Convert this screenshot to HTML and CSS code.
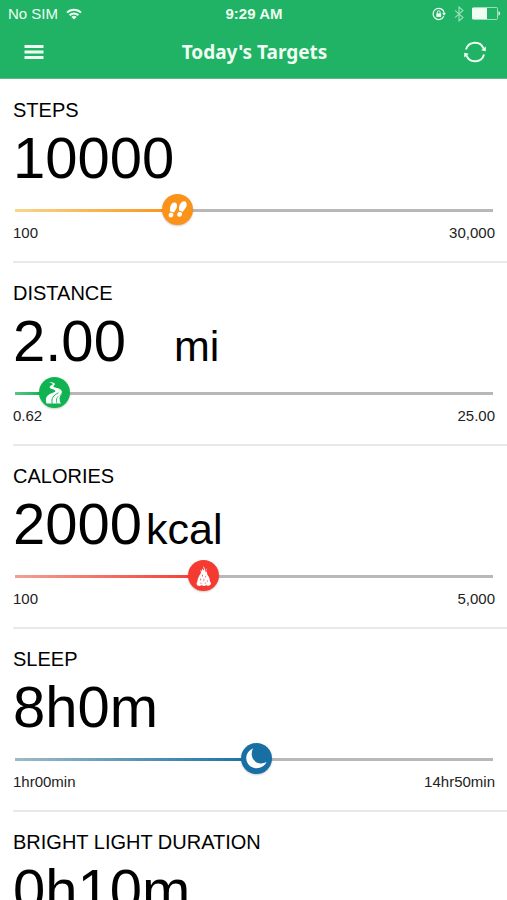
FILE: index.html
```html
<!DOCTYPE html>
<html lang="en">
<head>
    <meta charset="UTF-8">
    <meta name="viewport" content="width=device-width, initial-scale=1.0">
    <title>Today's Targets</title>
    <link rel="stylesheet" href="styles.css">
</head>
<body>
    <header class="header">
        <div class="status">
            <div class="status-left">
                <span>No SIM</span>
                <svg width="16" height="12" viewBox="0 0 16 12" fill="none" stroke="currentColor" stroke-width="2">
                    <path d="M1 4.6a10 10 0 0 1 14 0M3.6 7.3a6.3 6.3 0 0 1 8.800 0"/>
                    <path d="M8 11.6 5.4 9a3.7 3.7 0 0 1 5.2 0z" fill="currentColor" stroke="none"/>
                </svg>
            </div>
            <span class="time">9:29 AM</span>
            <div class="status-right">
                <svg width="14" height="14" viewBox="0 0 14 14" fill="none" stroke="currentColor">
                    <path d="M11.8 9.2A5.6 5.6 0 1 1 12.2 6" stroke-width="1.2"/>
                    <path d="M10.2 6h3.6L12 8.8z" fill="currentColor" stroke="none"/>
                    <path d="M4.3 6.3h4.9v3.6H4.3z" fill="currentColor" stroke="none"/>
                    <path d="M5.3 6.5V5.2a1.4 1.4 0 0 1 2.8 0v1.3"/>
                </svg>
                <svg class="bluetooth" width="10" height="16" viewBox="0 0 10 16" fill="none" stroke="currentColor" stroke-width="1.1">
                    <path d="M1 4.3 9 11.5 5 15V1l4 3.5L1 11.7"/>
                </svg>
                <svg width="28" height="13" viewBox="0 0 28 13">
                    <rect x=".5" y=".5" width="25" height="12" rx="1" fill="none" stroke="currentColor" opacity=".6"/>
                    <rect x="0" y="1" width="15" height="11" fill="currentColor"/>
                    <path d="M26.500 4.3c2 .6 2 3.8 0 4.4z" fill="currentColor"/>
                </svg>
            </div>
        </div>
        <div class="navbar">
            <button class="nav-btn" type="button" aria-label="Menu">
                <svg width="20" height="14" viewBox="0 0 20 14" fill="currentColor">
                    <path d="M.5 0h19v3H.5zM.5 5.5h19v3H.5zM.5 11h19v3H.5z"/>
                </svg>
            </button>
            <h1>Today's Targets</h1>
            <button class="nav-btn" type="button" aria-label="Refresh">
                <svg width="24" height="22" viewBox="0 0 24 22" fill="none" stroke="currentColor" stroke-width="1.9">
                    <path d="M3 8.6A9.3 9.3 0 0 1 20.6 7.6M21 13.4A9.3 9.3 0 0 1 3.4 14.4"/>
                    <path d="M22.8 5.6v4.6l-4.6-1zM1.2 16.4v-4.6l4.6 1z" fill="currentColor" stroke="none"/>
                </svg>
            </button>
        </div>
    </header>

    <main class="targets">
        <section class="target steps">
            <h2><label for="steps">STEPS</label></h2>
            <p class="value">10000</p>
            <div class="slider" style="--pos: 0.331">
                <input type="range" id="steps" min="100" max="30000" step="any" value="10000">
                <svg class="icon" viewBox="0 0 31 31" fill="#fff">
                    <path d="M12.800 8.500c2.200.3 2.700 2.800 1.900 5.200-.6 1.800-2 3-2.700 4.900l-4.100-1.300c.2-1.500-.2-2.600.3-4.400.7-2.500 2.400-4.700 4.600-4.400z"/>
                    <ellipse cx="9" cy="21" rx="2.300" ry="2.500" transform="rotate(20 9 21)"/>
                    <path d="M22.300 7.200c2.400.4 2.900 3 2 5.500-.7 2-2.600 3.200-3.500 5.200l-3.900-1.600c.3-1.500-.1-2.800.5-4.500.8-2.600 2.600-5 4.900-4.600z"/>
                    <ellipse cx="17.700" cy="20.300" rx="2.400" ry="2.500" transform="rotate(20 17.700 20.300)"/>
                </svg>
            </div>
            <div class="limits"><span>100</span><span>30,000</span></div>
        </section>

        <section class="target distance">
            <h2><label for="distance">DISTANCE</label></h2>
            <p class="value">2.00<span class="unit">mi</span></p>
            <div class="slider" style="--pos: 0.057">
                <input type="range" id="distance" min="0.62" max="25" step="any" value="2">
                <svg class="icon" viewBox="0 0 31 31" fill="#fff">
                    <path d="M10 5.200c3.500 0 6.200.6 5.900 2.100-.3 1.200-2.200 1.600-1.300 2.400 1.400 1.200 7.700 1.500 8.300 4.700.4 2.400-2.400 3.500-4.200 5.200-1.900 1.800-2.200 4-.9 7H7.600c-2-5.500.5-8.200 4.300-10 3.500-1.600 6.100-2.500 3.500-3.700-2.100-1-5-1.100-4.700-2.900.2-1.500 3.500-2 3-3-.3-.8-1.800-1.300-3.700-1.800z"/>
                    <path d="M23.300 16.500c-3 2.500-3.500 5.500-1.400 10.100h-3.500c-1.600-4.500.2-7.800 4.900-10.100z"/>
                    <path d="M19.500 15.800c-5.200 2.600-7.500 5.500-6.300 10.800" fill="none" stroke="#10b351"/>
                </svg>
            </div>
            <div class="limits"><span>0.62</span><span>25.00</span></div>
        </section>

        <section class="target calories">
            <h2><label for="calories">CALORIES</label></h2>
            <p class="value">2000<span class="unit">kcal</span></p>
            <div class="slider" style="--pos: 0.388">
                <input type="range" id="calories" min="100" max="5000" step="any" value="2000">
                <svg class="icon" viewBox="0 0 31 31" fill="#fff">
                    <path d="M15.5 6.2c-.8 1.7 1.5 2.5.4 4.6-.6-1-.9-1.6-1.7-2-.2 2.2-1.5 2.9-1.6 5-1.5 2-3 4.6-3.2 7.4-1 1.4-1.1 3.5.2 4.3 1.4.8 3.1.4 4-.6 1.3 1.4 3.3 1.4 4.5 0 1 1.1 3 1.3 4.1.2 1.1-1.1.9-2.9-.3-3.9-.1-2.6-1-4.7-2.7-6.6.1-1.6-.4-2.6-1-3.3l-.5 1.300c-.4-2.600-.8-4.600-2.200-6.400z"/>
                    <path d="M14 14l1 1.8-1 1.2zM17.3 15.5l.9 1-.7 1.5zM12.3 18l1 1.6-1 1.2zM15.7 18.3l.8 1.7-1 1.5zM19 20l.8 1-1 1.4zM12.8 22.2l.8 1.3-1 .6zM17 22.2l.8 1-1 .9z" fill="#f53b31"/>
                    <path d="M12.8 9.5l.5 1.6-.8 1zM18.3 8.2l.5 1.5-.8.8z"/>
                </svg>
            </div>
            <div class="limits"><span>100</span><span>5,000</span></div>
        </section>

        <section class="target sleep">
            <h2><label for="sleep">SLEEP</label></h2>
            <p class="value">8h0m</p>
            <div class="slider" style="--pos: 0.506">
                <input type="range" id="sleep" min="60" max="890" step="any" value="480">
                <svg class="icon" viewBox="0 0 31 31" fill="#fff">
                    <path d="M12 5.400C6 8 3.500 14.500 6.500 20c4 7.300 15.400 7 19-.9-4.400 2.400-9.700 1.700-12.600-2-2.700-3.500-2.800-8-.9-11.700z"/>
                </svg>
            </div>
            <div class="limits"><span>1hr00min</span><span>14hr50min</span></div>
        </section>

        <section class="target">
            <h2>BRIGHT LIGHT DURATION</h2>
            <p class="value">0h10m</p>
        </section>
    </main>
</body>
</html>
```
FILE: styles.css
```css
* {
box-sizing: border-box;
}

body {
margin: 0;
height: 100vh;
display: flex;
flex-direction: column;
background: #fff;
color: #000;
font-family: "Liberation Sans", Arial, sans-serif;
}

/* header */
.header {
flex: none;
background: #20b265;
border-bottom: 1px solid #5fb889;
color: #effff2;
}

.status {
display: grid;
grid-template-columns: 1fr auto 1fr;
align-items: center;
height: 27px;
padding: 0 7px 0 8px;
font-size: 15px;
}

.status-left,
.status-right {
display: flex;
align-items: center;
gap: 8px;
}

.status-right {
justify-content: flex-end;
}

.bluetooth {
opacity: 0.6;
}

.time {
font-weight: bold;
}

.navbar {
display: flex;
align-items: center;
justify-content: space-between;
height: 51px;
padding: 0 18px 2px 20px;
}

.navbar h1 {
margin: 0;
font-family: "Noto Sans", sans-serif;
font-size: 19px;
line-height: 28px;
}

.nav-btn {
display: flex;
align-items: center;
justify-content: center;
width: 28px;
height: 28px;
padding: 0;
border: none;
background: none;
color: inherit;
cursor: pointer;
}

/* list of targets */
.targets {
flex: 1;
min-height: 0;
padding-top: 1px;
overflow-y: auto;
scrollbar-width: none;
}

.target {
height: 183px;
margin-left: 13px;
padding: 18px 12px 0 0;
border-bottom: 2px solid #e9e9e9;
}

.target h2 {
margin: 0;
font-size: 20px;
font-weight: normal;
line-height: 24px;
}

.value {
margin: 0;
font-size: 58px;
line-height: 72px;
}

.unit {
margin-left: 4px;
font-size: 43px;
line-height: 1;
}

.distance .unit {
margin-left: 48px;
}

/* slider */
.slider {
position: relative;
height: 31px;
}

.slider input {
appearance: none;
display: block;
width: 100%;
height: 31px;
margin: 0;
background: linear-gradient(to right, var(--light), var(--color)) 2px 15px / calc(var(--pos) * 100%) 3px no-repeat,
linear-gradient(#b8b8b8, #b8b8b8) 2px 15px / calc(100% - 4px) 3px no-repeat;
cursor: pointer;
}

.slider input::-webkit-slider-thumb {
appearance: none;
width: 31px;
height: 31px;
border-radius: 50%;
background: var(--color);
box-shadow: 0 1px 2px rgba(0, 0, 0, 0.2);
}

.slider .icon {
position: absolute;
top: 0;
left: calc(var(--pos) * (100% - 31px));
width: 31px;
height: 31px;
pointer-events: none;
}

.limits {
display: flex;
justify-content: space-between;
color: #222;
font-size: 15px;
line-height: 16px;
}

.steps {
--color: #fb9219;
--light: #f8d68c;
}

.distance {
--color: #10b351;
--light: #5cc488;
}

.calories {
--color: #f53b31;
--light: #f2a094;
}

.sleep {
--color: #176fa3;
--light: #9dbac9;
}
```
